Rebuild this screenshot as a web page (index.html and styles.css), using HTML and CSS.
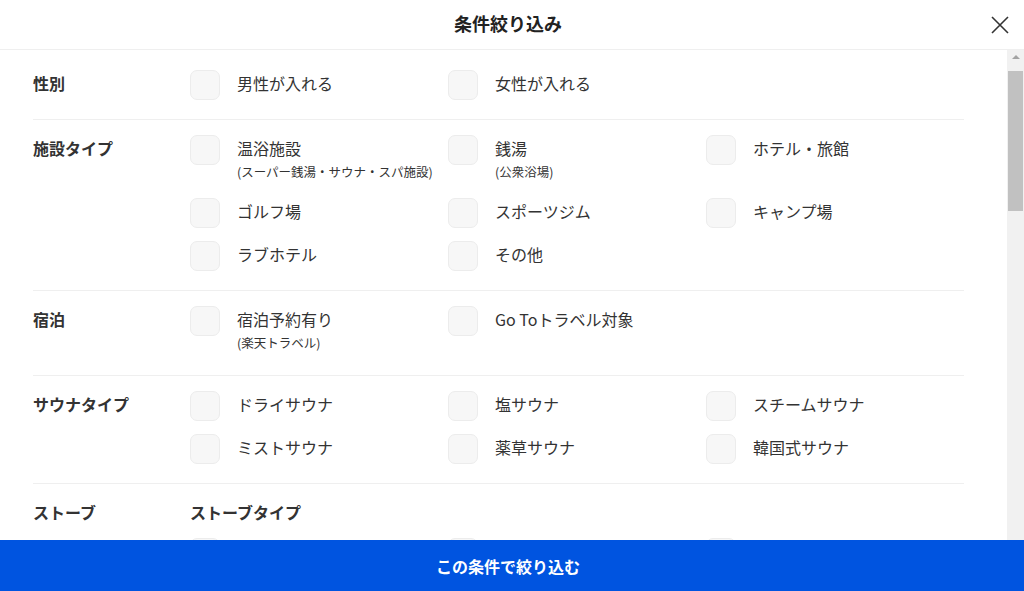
FILE: index.html
```html
<!DOCTYPE html>
<html lang="ja">
<head>
<meta charset="utf-8">
<title>条件絞り込み</title>
<link rel="stylesheet" href="styles.css">
</head>
<body>
<div class="modal">
  <header class="header">
    <span class="spacer"></span>
    <h1 class="title">条件絞り込み</h1>
    <button class="close" aria-label="閉じる">
      <svg width="18" height="18" viewBox="0 0 18 18"><path d="M1 1L17 17M17 1L1 17" stroke="#333" stroke-width="1.6" fill="none"/></svg>
    </button>
  </header>
  <div class="body">
    <div class="scroll">
      <section class="section">
        <div class="label">性別</div>
        <div class="options">
          <label class="opt"><span class="box"></span><span class="txt"><span class="main">男性が入れる</span></span></label>
          <label class="opt"><span class="box"></span><span class="txt"><span class="main">女性が入れる</span></span></label>
        </div>
      </section>
      <section class="section">
        <div class="label">施設タイプ</div>
        <div class="options">
          <label class="opt"><span class="box"></span><span class="txt"><span class="main">温浴施設</span><span class="sub">(スーパー銭湯・サウナ・スパ施設)</span></span></label>
          <label class="opt"><span class="box"></span><span class="txt"><span class="main">銭湯</span><span class="sub">(公衆浴場)</span></span></label>
          <label class="opt"><span class="box"></span><span class="txt"><span class="main">ホテル・旅館</span></span></label>
          <label class="opt"><span class="box"></span><span class="txt"><span class="main">ゴルフ場</span></span></label>
          <label class="opt"><span class="box"></span><span class="txt"><span class="main">スポーツジム</span></span></label>
          <label class="opt"><span class="box"></span><span class="txt"><span class="main">キャンプ場</span></span></label>
          <label class="opt"><span class="box"></span><span class="txt"><span class="main">ラブホテル</span></span></label>
          <label class="opt"><span class="box"></span><span class="txt"><span class="main">その他</span></span></label>
        </div>
      </section>
      <section class="section">
        <div class="label">宿泊</div>
        <div class="options">
          <label class="opt"><span class="box"></span><span class="txt"><span class="main">宿泊予約有り</span><span class="sub">(楽天トラベル)</span></span></label>
          <label class="opt"><span class="box"></span><span class="txt"><span class="main">Go Toトラベル対象</span></span></label>
        </div>
      </section>
      <section class="section">
        <div class="label">サウナタイプ</div>
        <div class="options">
          <label class="opt"><span class="box"></span><span class="txt"><span class="main">ドライサウナ</span></span></label>
          <label class="opt"><span class="box"></span><span class="txt"><span class="main">塩サウナ</span></span></label>
          <label class="opt"><span class="box"></span><span class="txt"><span class="main">スチームサウナ</span></span></label>
          <label class="opt"><span class="box"></span><span class="txt"><span class="main">ミストサウナ</span></span></label>
          <label class="opt"><span class="box"></span><span class="txt"><span class="main">薬草サウナ</span></span></label>
          <label class="opt"><span class="box"></span><span class="txt"><span class="main">韓国式サウナ</span></span></label>
        </div>
      </section>
      <section class="section">
        <div class="label">ストーブ</div>
        <div class="group">
          <div class="subhead">ストーブタイプ</div>
          <div class="options">
            <span class="opt"><span class="box"></span></span>
            <span class="opt"><span class="box"></span></span>
            <span class="opt"><span class="box"></span></span>
          </div>
        </div>
      </section>
    </div>
    <div class="scrollbar">
      <div class="arrow"></div>
      <div class="thumb"></div>
    </div>
  </div>
  <button class="submit">この条件で絞り込む</button>
</div>
</body>
</html>
```

FILE: styles.css
```css
* { box-sizing: border-box; }
html, body { margin: 0; padding: 0; }
body {
  font-family: "Noto Sans CJK JP", "Noto Sans", sans-serif;
  color: #333;
  background: #fff;
}
.modal {
  width: 1024px;
  height: 591px;
  display: flex;
  flex-direction: column;
  overflow: hidden;
}
.header {
  height: 50px;
  flex: none;
  display: grid;
  grid-template-columns: 1fr auto 1fr;
  align-items: center;
  border-bottom: 1px solid #efefef;
}
.title {
  margin: 0;
  font-size: 18px;
  font-weight: 700;
  color: #222;
  line-height: 1;
  padding: 0 8px 4px 0;
}
.close {
  justify-self: end;
  margin-right: 15px;
  width: 18px;
  height: 18px;
  padding: 0;
  border: 0;
  background: none;
  display: flex;
}
.body {
  flex: 1;
  display: flex;
  min-height: 0;
}
.scroll {
  flex: 1;
  overflow: hidden;
  padding: 5px 43px 0 33px;
}
.section {
  display: grid;
  grid-template-columns: 157px 1fr;
  padding: 15px 0 19px;
  border-bottom: 1px solid #efefef;
}
.label, .subhead {
  font-size: 16px;
  font-weight: 700;
  line-height: 26px;
  padding-bottom: 4px;
  color: #333;
}
.group .options { margin-top: 9px; }
.options {
  display: grid;
  grid-template-columns: repeat(3, 258px);
  row-gap: 13px;
}
.opt {
  display: flex;
  align-items: flex-start;
  gap: 17px;
}
.box {
  flex: none;
  width: 30px;
  height: 30px;
  border-radius: 7px;
  background: #f7f7f7;
  border: 1px solid #ececec;
}
.txt {
  display: flex;
  flex-direction: column;
}
.main {
  font-size: 16px;
  line-height: 26px;
  padding-bottom: 4px;
  color: #333;
}
.sub {
  font-size: 12.5px;
  line-height: 14px;
  margin-bottom: 6px;
  color: #333;
}
.scrollbar {
  flex: none;
  width: 17px;
  background: #f1f1f1;
  display: flex;
  flex-direction: column;
  align-items: center;
  padding-top: 5px;
}
.arrow {
  width: 0;
  height: 0;
  border-left: 4px solid transparent;
  border-right: 4px solid transparent;
  border-bottom: 4px solid #a3a3a3;
}
.thumb {
  margin-top: 12px;
  width: 15px;
  height: 140px;
  background: #c1c1c1;
}
.submit {
  flex: none;
  height: 51px;
  border: 0;
  margin: 0;
  background: #0054e0;
  color: #fff;
  font-family: inherit;
  font-size: 16px;
  font-weight: 700;
  padding: 0 8px 0 0;
}
```
